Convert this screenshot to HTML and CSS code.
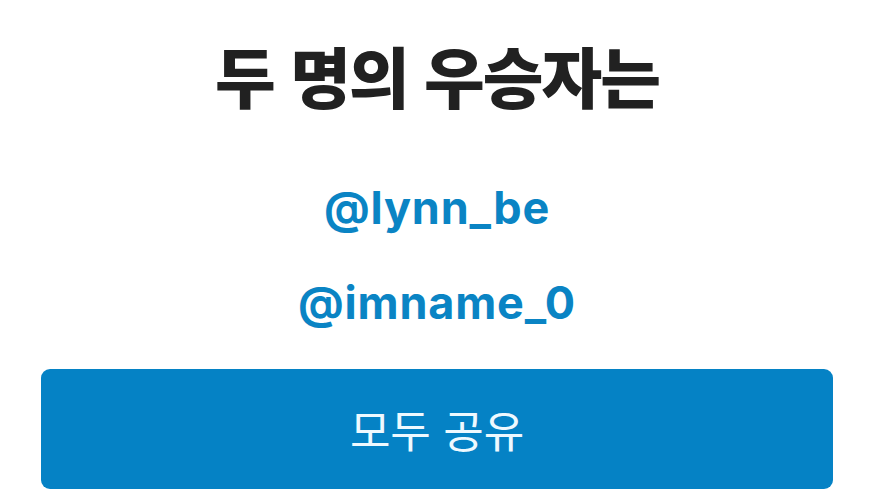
FILE: index.html
```html
<!DOCTYPE html>
<html lang="ko">
<head>
    <meta charset="UTF-8">
    <meta name="viewport" content="width=device-width, initial-scale=1.0">
    <title>우승자 발표</title>
    <link rel="stylesheet" href="styles.css">
</head>
<body>
    <div class="winners">
        <h2>두 명의 우승자는</h2>
        <ul class="winner-list">
            <li>@lynn_be</li>
            <li>@imname_0</li>
        </ul>
        <button class="share-btn">모두 공유</button>
    </div>
</body>
</html>
```

FILE: styles.css
```css
body {
    margin: 0;
    background: #ffffff;
    font-family: 'Inter', 'Noto Sans CJK KR', sans-serif;
}
.winners {
    padding: 26px 48px 6px 41px;
    display: flex;
    flex-direction: column;
}
h2 {
    margin: 0;
    font-family: 'Noto Sans CJK KR', sans-serif;
    font-size: 66px;
    font-weight: 900;
    line-height: 96px;
    letter-spacing: -2px;
    color: #212121;
    text-align: center;
}
.winner-list {
    list-style: none;
    margin: 62px 0 0;
    padding: 0;
    display: flex;
    flex-direction: column;
    gap: 47px;
    text-align: center;
}
.winner-list li {
    font-size: 45px;
    font-weight: 700;
    line-height: 48px;
    letter-spacing: 0.8px;
    color: #0a84c4;
}
.share-btn {
    margin-top: 42px;
    height: 120px;
    border: none;
    border-radius: 9px;
    background-color: #0582c5;
    color: #eef9ff;
    font-family: 'Noto Sans CJK KR', sans-serif;
    font-size: 44px;
    font-weight: 400;
    cursor: pointer;
}
```
